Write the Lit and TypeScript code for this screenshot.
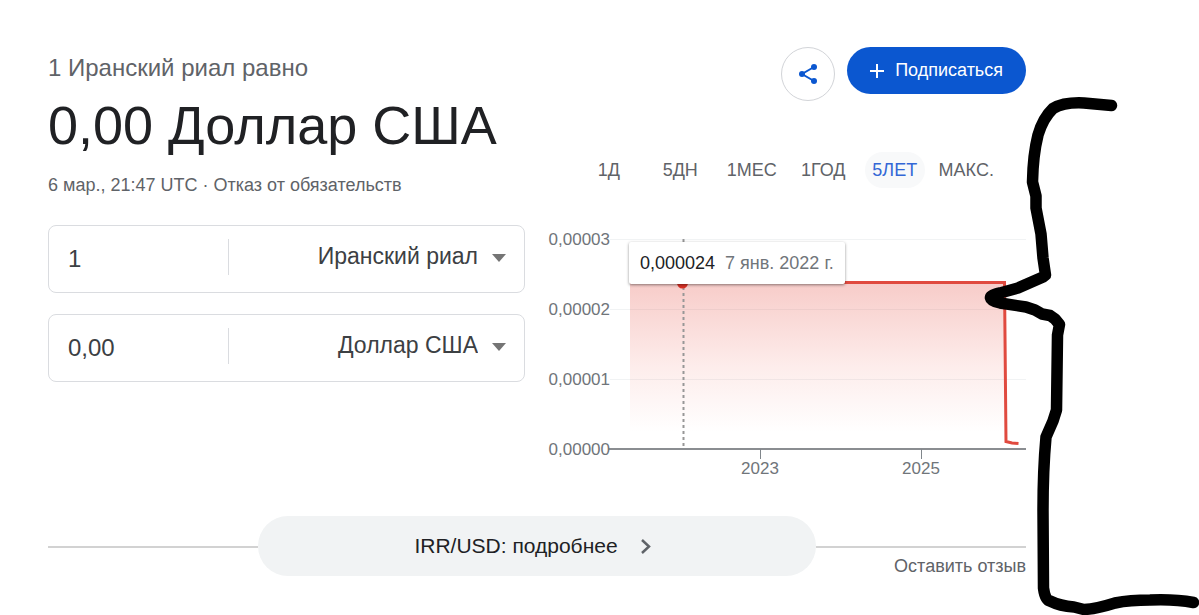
import { LitElement, html, css, svg } from "lit";
import { customElement, property, state } from "lit/decorators.js";

@customElement("currency-field")
class CurrencyField extends LitElement {
  static styles = css`
    :host {
      display: block;
    }
    .box {
      display: flex;
      align-items: flex-start;
      box-sizing: border-box;
      height: 68px;
      padding: 13px 17px 0 19px;
      border: 1px solid #dadce0;
      border-radius: 8px;
      color: #3c4043;
    }
    .amount,
    .currency {
      box-sizing: border-box;
      margin: 0;
      border: 0;
      outline: 0;
      background: none;
      color: inherit;
      font-family: "Liberation Sans", Arial, sans-serif;
    }
    .amount {
      width: 100%;
      min-width: 0;
      height: 40px;
      padding: 0;
      font-size: 24px;
    }
    .cell {
      flex: 0 1 160px;
      display: flex;
      height: 36px;
      border-right: 1px solid #dadce0;
    }
    .picker {
      flex: 1;
      display: flex;
      align-items: center;
      gap: 13px;
      min-width: 0;
      height: 36px;
    }
    .currency {
      flex: 1;
      min-width: 0;
      height: 36px;
      padding: 0 0 2px;
      appearance: none;
      font-size: 23px;
      text-align: right;
      text-align-last: right;
    }
    .arrow {
      flex: none;
      margin-top: 2px;
    }
  `;

  @property() amount = "";
  @property() currency = "";
  @property() name = "";

  render() {
    return html`
      <div class="box">
        <div class="cell">
          <input class="amount" type="text" aria-label="Сумма" name=${this.name} .value=${this.amount} />
        </div>
        <div class="picker">
          <select class="currency" aria-label="Валюта">
            <option>${this.currency}</option>
          </select>
          <svg class="arrow" width="16" height="8" viewBox="0 0 16 8" aria-hidden="true">
            <path d="M1 0h14L8 8z" fill="#757575" />
          </svg>
        </div>
      </div>
    `;
  }
}

const LEVELS = [
  { y: 11, label: "0,00003" },
  { y: 81, label: "0,00002" },
  { y: 151, label: "0,00001" },
  { y: 221, label: "0,00000" },
];
const YEARS = [
  { x: 211, label: "2023" },
  { x: 372, label: "2025" },
];

@customElement("rate-chart")
class RateChart extends LitElement {
  static styles = css`
    :host {
      display: block;
      position: relative;
    }
    .plot {
      display: block;
      width: 100%;
      height: auto;
      overflow: visible;
    }
    .label {
      fill: #70757a;
      font-family: "Liberation Sans", Arial, sans-serif;
      font-size: 17px;
    }
    .tip {
      position: absolute;
      left: 80px;
      top: 14px;
      display: flex;
      gap: 10px;
      box-sizing: border-box;
      padding: 0 11px;
      border-radius: 2px;
      background: #fff;
      box-shadow: 0 1px 3px rgba(0, 0, 0, 0.45);
      color: #202124;
      font-size: 18px;
      line-height: 42px;
      white-space: nowrap;
    }
    .date {
      color: #70757a;
    }
  `;

  render() {
    return html`
      <svg class="plot" viewBox="0 0 477 252" role="img" aria-label="Курс IRR/USD за 5 лет">
        <defs>
          <linearGradient id="fade" x1="0" y1="0" x2="0" y2="1">
            <stop offset="0" stop-color="#e2483d" stop-opacity="0.28" />
            <stop offset="0.5" stop-color="#ea4335" stop-opacity="0.1" />
            <stop offset="0.9" stop-color="#ea4335" stop-opacity="0" />
          </linearGradient>
        </defs>
        ${LEVELS.slice(0, 3).map(
          (l) => svg`<path d=${`M61 ${l.y + 0.5}H477`} stroke="#f1f3f4" />`
        )}
        <path d="M81 54H455L457 213L469 216V221H81z" fill="url(#fade)" />
        <path d="M60 221H477" stroke="#8a8d91" stroke-width="2" />
        ${YEARS.map(
          (t) => svg`
            <path d=${`M${t.x}.5 221v10`} stroke="#80868b" />
            <text class="label" x=${t.x} y="246" text-anchor="middle">${t.label}</text>`
        )}
        ${LEVELS.map(
          (l) => svg`<text class="label" x="61" y=${l.y + 6} text-anchor="end">${l.label}</text>`
        )}
        <path d="M134.500 11V220" stroke="#979797" stroke-width="2" stroke-dasharray="3 3" />
        <path
          d="M81 54.500H455.500L457 213.500L463 215L469.500 215.500"
          fill="none"
          stroke="#e04a3f"
          stroke-width="3"
        />
        <circle cx="133.500" cy="55" r="5.500" fill="#d93025" />
      </svg>
      <div class="tip"><span>0,000024</span><span class="date">7 янв. 2022 г.</span></div>
    `;
  }
}

const PERIODS = ["1Д", "5ДН", "1МЕС", "1ГОД", "5ЛЕТ", "МАКС."];

@customElement("app-root")
class AppRoot extends LitElement {
  static styles = css`
    :host {
      display: block;
      position: relative;
      box-sizing: border-box;
      min-height: 100vh;
      padding: 47px 173px 0 48px;
      overflow: hidden;
      background: #fff;
      color: #5f6368;
      font-family: "Liberation Sans", Arial, sans-serif;
      font-size: 18px;
    }
    .columns {
      display: grid;
      grid-template-columns: minmax(0, 1fr) minmax(0, 1fr);
      gap: 24px;
    }
    .from {
      font-size: 24px;
      line-height: 42px;
    }
    .to {
      margin: 0;
      color: #202124;
      font-size: 54px;
      font-weight: 400;
      line-height: 72px;
      white-space: nowrap;
    }
    .info {
      line-height: 48px;
    }
    .info a,
    .feedback {
      color: inherit;
      text-decoration: none;
    }
    .fields {
      display: grid;
      gap: 21px;
      margin-top: 16px;
    }
    .actions {
      display: flex;
      justify-content: flex-end;
      align-items: flex-start;
      gap: 12px;
    }
    button {
      margin: 0;
      padding: 0;
      border: 0;
      background: none;
      color: inherit;
      font: inherit;
      cursor: pointer;
    }
    .share {
      display: grid;
      place-items: center;
      box-sizing: border-box;
      width: 54px;
      height: 54px;
      border: 1px solid #d2d4d8;
      border-radius: 50%;
    }
    .follow {
      display: flex;
      align-items: center;
      gap: 10px;
      height: 47px;
      padding: 0 23px 0 22px;
      border-radius: 24px;
      background: #0b57d0;
      color: #fff;
    }
    .periods {
      display: grid;
      grid-template-columns: repeat(6, 1fr);
      margin: 51px 24px 40px;
    }
    .period {
      height: 36px;
      margin: 0 6px;
      border-radius: 18px;
      white-space: nowrap;
    }
    .period.active {
      background: #f8f9fa;
      color: #3367d6;
    }
    .more-row {
      display: grid;
      grid-template-columns: 210px 1fr 210px;
      align-items: start;
      margin-top: 36px;
    }
    .side {
      margin-top: 30px;
      border-top: 2px solid #d2d2d2;
      line-height: 24px;
      text-align: right;
    }
    .feedback {
      display: block;
      margin-top: 6px;
    }
    .more {
      display: flex;
      justify-content: center;
      align-items: center;
      gap: 22px;
      height: 60px;
      padding-right: 8px;
      border-radius: 30px;
      background: #f1f3f4;
      color: #202124;
      font-size: 21px;
    }
    .brace {
      position: absolute;
      top: 90px;
      right: 0;
      pointer-events: none;
    }
  `;

  @state() private period = "5ЛЕТ";

  render() {
    return html`
      <main>
        <div class="columns">
          <section>
            <div class="from">1 Иранский риал равно</div>
            <h1 class="to">0,00 Доллар США</h1>
            <div class="info">6 мар., 21:47 UTC · <a href="#">Отказ от обязательств</a></div>
            <div class="fields">
              <currency-field name="from" amount="1" currency="Иранский риал"></currency-field>
              <currency-field name="to" amount="0,00" currency="Доллар США"></currency-field>
            </div>
          </section>
          <section>
            <div class="actions">
              <button class="share" aria-label="Поделиться">
                <svg width="20" height="20" viewBox="0 0 20 20" aria-hidden="true">
                  <path d="M16 3L4 10l12 7" fill="none" stroke="#0b57d0" stroke-width="2" />
                  <circle cx="16" cy="3" r="3" fill="#0b57d0" />
                  <circle cx="4" cy="10" r="3" fill="#0b57d0" />
                  <circle cx="16" cy="17" r="3" fill="#0b57d0" />
                </svg>
              </button>
              <button class="follow">
                <svg width="16" height="16" viewBox="0 0 16 16" aria-hidden="true">
                  <path d="M8 1v14M1 8h14" stroke="#fff" stroke-width="2" />
                </svg>
                Подписаться
              </button>
            </div>
            <div class="periods">
              ${PERIODS.map(
                (p) => html`<button
                  class=${p === this.period ? "period active" : "period"}
                  @click=${() => (this.period = p)}
                >${p}</button>`
              )}
            </div>
            <rate-chart></rate-chart>
          </section>
        </div>
        <div class="more-row">
          <div class="side"></div>
          <button class="more">
            IRR/USD: подробнее
            <svg width="12" height="16" viewBox="0 0 12 16" aria-hidden="true">
              <path d="M2 2l7 6.500L2 15" fill="none" stroke="#5f6368" stroke-width="2.500" />
            </svg>
          </button>
          <div class="side"><a class="feedback" href="#">Оставить отзыв</a></div>
        </div>
      </main>
      <svg class="brace" width="219" height="525" viewBox="980 90 219 525" aria-hidden="true">
        <path
          d="M1111.500 105.500L1084 103Q1064 102 1053 108.500Q1043 118 1038 135Q1033 155 1032.500 182L1036 196V208L1041 234L1043 258L1045.500 275L1043 277L1018 288L1000 293Q990 295 990.500 298Q991 301 1000 303L1026 307L1035 310L1042 314L1050 315.500L1055 319L1059.500 324.500L1057.500 335L1056.500 410L1053 421L1046 437Q1043 470 1043 510L1043.500 588Q1045 600 1050 601Q1060 606 1074 607L1084 609.500Q1096 609 1115 603Q1130 600 1150 600Q1175 599 1193.500 602.500"
          fill="none"
          stroke="#000"
          stroke-width="11.500"
          stroke-linecap="round"
          stroke-linejoin="round"
        />
      </svg>
    `;
  }
}
